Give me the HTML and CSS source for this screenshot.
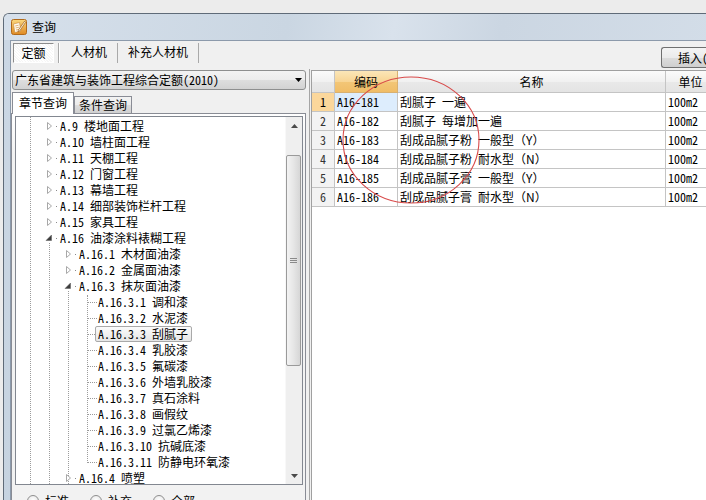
FILE: index.html
```html
<!DOCTYPE html>
<html>
<head>
<meta charset="utf-8">
<title>查询</title>
<link rel="stylesheet" href="styles.css">
</head>
<body>
<div class="desk">
  <div class="window">
    <div class="titlebar">
      <svg class="appicon" viewBox="0 0 16 16" width="16" height="16">
        <defs>
          <linearGradient id="ig" x1="0" y1="0" x2="0" y2="1">
            <stop offset="0" stop-color="#fbd87e"/>
            <stop offset="1" stop-color="#df8a24"/>
          </linearGradient>
        </defs>
        <rect x="0.5" y="0.5" width="15" height="15" rx="2" fill="url(#ig)" stroke="#b06a1c"/>
        <path d="M2.5 5 L8.5 3.5 L9.8 12 L3.8 13.5 Z" fill="#fffaf0" stroke="#c98a3a" stroke-width="0.6"/>
        <path d="M4.2 7 L7.6 6.2 M4.6 9 L8 8.2 M5 11 L8.4 10.2" stroke="#d9a35a" stroke-width="0.8"/>
        <path d="M13.6 2.2 L7.4 11 L7 13 L8.7 11.9 L14.6 3.3 Z" fill="#fff4d4" stroke="#8a4a10" stroke-width="0.6"/>
      </svg>
      <span class="title">查询</span>
    </div>
    <div class="client">
      <div class="toolbar">
        <div class="btabs">
          <span class="btab on">定额</span><span class="btab mid">人材机</span><span class="btab last">补充人材机</span>
        </div>
        <div class="insert">插入(I)</div>
      </div>
      <div class="main">
        <div class="left">
          <div class="combo">
            <span>广东省建筑与装饰工程综合定额(2010)</span>
            <svg width="7" height="4" viewBox="0 0 7 4"><path d="M0 0H7L3.5 4Z" fill="#000"/></svg>
          </div>
          <div class="itabs">
            <span class="itab on">章节查询</span><span class="itab">条件查询</span>
          </div>
          <div class="ipanel">
            <div class="tree">
              <div class="rows">
                <i class="vline la"></i>
                <i class="vline lb"></i>
                <i class="vline lc"></i>
                <i class="vline ld"></i>

                <div class="row l1"><svg class="ex" viewBox="0 0 16 16"><path d="M3.5 4.5L7.5 8L3.5 11.5Z" fill="#fff" stroke="#a8a8a8"/><rect x="12" y="8" width="1" height="1" fill="#8a8a8a"/></svg><span class="lbl">A.9 楼地面工程</span></div>
                <div class="row l1"><svg class="ex" viewBox="0 0 16 16"><path d="M3.5 4.5L7.5 8L3.5 11.5Z" fill="#fff" stroke="#a8a8a8"/><rect x="12" y="8" width="1" height="1" fill="#8a8a8a"/></svg><span class="lbl">A.10 墙柱面工程</span></div>
                <div class="row l1"><svg class="ex" viewBox="0 0 16 16"><path d="M3.5 4.5L7.5 8L3.5 11.5Z" fill="#fff" stroke="#a8a8a8"/><rect x="12" y="8" width="1" height="1" fill="#8a8a8a"/></svg><span class="lbl">A.11 天棚工程</span></div>
                <div class="row l1"><svg class="ex" viewBox="0 0 16 16"><path d="M3.5 4.5L7.5 8L3.5 11.5Z" fill="#fff" stroke="#a8a8a8"/><rect x="12" y="8" width="1" height="1" fill="#8a8a8a"/></svg><span class="lbl">A.12 门窗工程</span></div>
                <div class="row l1"><svg class="ex" viewBox="0 0 16 16"><path d="M3.5 4.5L7.5 8L3.5 11.5Z" fill="#fff" stroke="#a8a8a8"/><rect x="12" y="8" width="1" height="1" fill="#8a8a8a"/></svg><span class="lbl">A.13 幕墙工程</span></div>
                <div class="row l1"><svg class="ex" viewBox="0 0 16 16"><path d="M3.5 4.5L7.5 8L3.5 11.5Z" fill="#fff" stroke="#a8a8a8"/><rect x="12" y="8" width="1" height="1" fill="#8a8a8a"/></svg><span class="lbl">A.14 细部装饰栏杆工程</span></div>
                <div class="row l1"><svg class="ex" viewBox="0 0 16 16"><path d="M3.5 4.5L7.5 8L3.5 11.5Z" fill="#fff" stroke="#a8a8a8"/><rect x="12" y="8" width="1" height="1" fill="#8a8a8a"/></svg><span class="lbl">A.15 家具工程</span></div>
                <div class="row l1"><svg class="ex" viewBox="0 0 16 16"><path d="M7.5 5V10.5H2Z" fill="#3c3c3c" stroke="#5a5a5a" stroke-width="0.5"/><rect x="12" y="8" width="1" height="1" fill="#8a8a8a"/></svg><span class="lbl">A.16 油漆涂料裱糊工程</span></div>

                <div class="row l2"><svg class="ex" viewBox="0 0 16 16"><path d="M3.5 4.5L7.5 8L3.5 11.5Z" fill="#fff" stroke="#a8a8a8"/><rect x="12" y="8" width="1" height="1" fill="#8a8a8a"/></svg><span class="lbl">A.16.1 木材面油漆</span></div>
                <div class="row l2"><svg class="ex" viewBox="0 0 16 16"><path d="M3.5 4.5L7.5 8L3.5 11.5Z" fill="#fff" stroke="#a8a8a8"/><rect x="12" y="8" width="1" height="1" fill="#8a8a8a"/></svg><span class="lbl">A.16.2 金属面油漆</span></div>
                <div class="row l2"><svg class="ex" viewBox="0 0 16 16"><path d="M7.5 5V10.5H2Z" fill="#3c3c3c" stroke="#5a5a5a" stroke-width="0.5"/><rect x="12" y="8" width="1" height="1" fill="#8a8a8a"/></svg><span class="lbl">A.16.3 抹灰面油漆</span></div>

                <div class="row l3"><svg class="ex" viewBox="0 0 16 16"><path d="M6 8.5H15" stroke="#9a9a9a" stroke-dasharray="1 1"/></svg><span class="lbl">A.16.3.1 调和漆</span></div>
                <div class="row l3"><svg class="ex" viewBox="0 0 16 16"><path d="M6 8.5H15" stroke="#9a9a9a" stroke-dasharray="1 1"/></svg><span class="lbl">A.16.3.2 水泥漆</span></div>
                <div class="row l3"><svg class="ex" viewBox="0 0 16 16"><path d="M6 8.5H15" stroke="#9a9a9a" stroke-dasharray="1 1"/></svg><span class="lbl sel">A.16.3.3 刮腻子</span></div>
                <div class="row l3"><svg class="ex" viewBox="0 0 16 16"><path d="M6 8.5H15" stroke="#9a9a9a" stroke-dasharray="1 1"/></svg><span class="lbl">A.16.3.4 乳胶漆</span></div>
                <div class="row l3"><svg class="ex" viewBox="0 0 16 16"><path d="M6 8.5H15" stroke="#9a9a9a" stroke-dasharray="1 1"/></svg><span class="lbl">A.16.3.5 氟碳漆</span></div>
                <div class="row l3"><svg class="ex" viewBox="0 0 16 16"><path d="M6 8.5H15" stroke="#9a9a9a" stroke-dasharray="1 1"/></svg><span class="lbl">A.16.3.6 外墙乳胶漆</span></div>
                <div class="row l3"><svg class="ex" viewBox="0 0 16 16"><path d="M6 8.5H15" stroke="#9a9a9a" stroke-dasharray="1 1"/></svg><span class="lbl">A.16.3.7 真石涂料</span></div>
                <div class="row l3"><svg class="ex" viewBox="0 0 16 16"><path d="M6 8.5H15" stroke="#9a9a9a" stroke-dasharray="1 1"/></svg><span class="lbl">A.16.3.8 画假纹</span></div>
                <div class="row l3"><svg class="ex" viewBox="0 0 16 16"><path d="M6 8.5H15" stroke="#9a9a9a" stroke-dasharray="1 1"/></svg><span class="lbl">A.16.3.9 过氯乙烯漆</span></div>
                <div class="row l3"><svg class="ex" viewBox="0 0 16 16"><path d="M6 8.5H15" stroke="#9a9a9a" stroke-dasharray="1 1"/></svg><span class="lbl">A.16.3.10 抗碱底漆</span></div>
                <div class="row l3"><svg class="ex" viewBox="0 0 16 16"><path d="M6 8.5H15" stroke="#9a9a9a" stroke-dasharray="1 1"/></svg><span class="lbl">A.16.3.11 防静电环氧漆</span></div>

                <div class="row l2"><svg class="ex" viewBox="0 0 16 16"><path d="M3.5 4.5L7.5 8L3.5 11.5Z" fill="#fff" stroke="#a8a8a8"/><rect x="12" y="8" width="1" height="1" fill="#8a8a8a"/></svg><span class="lbl">A.16.4 喷塑</span></div>
              </div>
              <div class="vscroll">
                <div class="sbtn"><svg width="7" height="4" viewBox="0 0 7 4"><path d="M0 4H7L3.5 0Z" fill="#4a4a4a"/></svg></div>
                <div class="track">
                  <div class="thumb"><svg width="7" height="5" viewBox="0 0 7 5"><path d="M0 0.5H7M0 2.5H7M0 4.5H7" stroke="#8a8a8a"/></svg></div>
                </div>
                <div class="sbtn"><svg width="7" height="4" viewBox="0 0 7 4"><path d="M0 0H7L3.5 4Z" fill="#4a4a4a"/></svg></div>
              </div>
            </div>
            <div class="radios">
              <span class="radio"><i class="dot"></i>标准</span>
              <span class="radio"><i class="dot"></i>补充</span>
              <span class="radio"><i class="dot"></i>全部</span>
            </div>
          </div>
        </div>
        <div class="right">
          <table class="grid">
            <thead>
              <tr><th class="c0"></th><th class="c1 hsel">编码</th><th class="c2">名称</th><th class="c3">单位</th></tr>
            </thead>
            <tbody>
              <tr><td class="rn rsel">1</td><td class="code cur">A16-181</td><td class="name">刮腻子 一遍</td><td class="unit">100m2</td></tr>
              <tr><td class="rn">2</td><td class="code">A16-182</td><td class="name">刮腻子 每增加一遍</td><td class="unit">100m2</td></tr>
              <tr><td class="rn">3</td><td class="code">A16-183</td><td class="name">刮成品腻子粉 一般型<span class="fw">（Y）</span></td><td class="unit">100m2</td></tr>
              <tr><td class="rn">4</td><td class="code">A16-184</td><td class="name">刮成品腻子粉 耐水型<span class="fw">（N）</span></td><td class="unit">100m2</td></tr>
              <tr><td class="rn">5</td><td class="code">A16-185</td><td class="name">刮成品腻子膏 一般型<span class="fw">（Y）</span></td><td class="unit">100m2</td></tr>
              <tr><td class="rn">6</td><td class="code">A16-186</td><td class="name">刮成品腻子膏 耐水型<span class="fw">（N）</span></td><td class="unit">100m2</td></tr>
            </tbody>
          </table>
        </div>
      </div>
    </div>
  </div>
</div>
<svg class="annot" width="706" height="500" viewBox="0 0 706 500">
  <ellipse cx="411" cy="140" rx="68" ry="63" fill="none" stroke="#d84a4a" stroke-width="1.1"/>
</svg>
</body>
</html>
```
FILE: styles.css
```css
* { box-sizing: border-box; }
html, body { margin: 0; padding: 0; }
body {
  width: 706px;
  height: 500px;
  overflow: hidden;
  position: relative;
  background: #ececec;
  color: #000;
  font-family: "Noto Sans CJK SC", "Noto Sans", sans-serif;
  font-size: 12px;
  line-height: 16px;
  font-feature-settings: "hwid" 1;
}
.desk { padding: 13px 0 0 3px; }
.window {
  width: 710px;
  height: 500px;
  border: 1px solid #5f6b78;
  border-right: none;
  border-bottom: none;
  border-radius: 6px 0 0 0;
  background: linear-gradient(#dbe4ee, #cbd7e4 26px, #c6d3e0);
  overflow: hidden;
}
.titlebar {
  height: 26px;
  display: flex;
  align-items: center;
  gap: 5px;
  padding-left: 7px;
  background: linear-gradient(100deg, #d6e0eb 0%, #cad6e2 40%, #d9e2ec 55%, #cbd6e2 70%, #d3dde8 100%);
}
.appicon { display: block; }
.title { font-size: 12px; color: #000; }

.client {
  margin-left: 6px;
  height: 480px;
  border-left: 1px solid #8c9aab;
  border-top: 1px solid #8c9aab;
  background: #f0f0f0;
}
.toolbar {
  height: 28px;
  display: flex;
  justify-content: space-between;
  align-items: flex-start;
}
.btabs {
  display: flex;
  margin: 2px 0 0 2px;
}
.btab {
  height: 20px;
  line-height: 18px;
  white-space: nowrap;
}
.btab.on {
  width: 41px;
  text-align: center;
  border: 1px solid;
  border-color: #8c8c8c #ffffff #ffffff #8c8c8c;
  background: repeating-linear-gradient(45deg, #f6f6f6 0 1px, #ffffff 1px 2px);
}
.btab.mid {
  margin-left: 4px;
  padding: 0 10px 0 12px;
  border-left: 1px solid #a9a9a9;
  border-right: 1px solid #a9a9a9;
  box-shadow: inset 1px 0 #ffffff;
}
.btab.last {
  padding: 0 10px;
  border-right: 1px solid #a9a9a9;
}
.insert {
  margin-top: 6px;
  width: 52px;
  height: 21px;
  padding-left: 16px;
  line-height: 19px;
  white-space: nowrap;
  overflow: hidden;
  border: 1px solid #707070;
  border-right: none;
  border-radius: 3px 0 0 3px;
  background: linear-gradient(#f4f4f4, #ebebeb 50%, #dddddd 51%, #cfcfcf);
}

.main {
  display: flex;
  height: 440px;
}
.left {
  width: 299px;
  flex-shrink: 0;
  border-right: 1px solid #a5a5a5;
}
.combo {
  margin: 1px 0 0 1px;
  width: 294px;
  height: 20px;
  display: flex;
  align-items: center;
  justify-content: space-between;
  padding: 0 3px 0 2px;
  border: 1px solid #8e8f8f;
  border-radius: 3px;
  background: linear-gradient(#f3f3f3, #ececec 50%, #dedede 51%, #d2d2d2);
  white-space: nowrap;
}
.combo svg { display: block; }
.itabs {
  margin-top: 2px;
  height: 21px;
  display: flex;
  align-items: flex-end;
  padding-left: 1px;
}
.itab {
  height: 17px;
  line-height: 16px;
  padding: 0 4px;
  border: 1px solid #898c95;
  border-bottom: none;
  background: linear-gradient(#f3f3f3, #ebebeb 50%, #dddddd 51%, #d0d0d0);
  white-space: nowrap;
}
.itab.on {
  height: 22px;
  line-height: 20px;
  padding: 0 6px;
  margin-bottom: -1px;
  position: relative;
  background: #ffffff;
}
.ipanel {
  width: 295px;
  height: 400px;
  border: 1px solid #898c95;
  padding: 2px 2px 0 3px;
  background: linear-gradient(#ffffff, #f2f2f2 40px);
}
.tree {
  width: 288px;
  height: 369px;
  display: flex;
  border: 1px solid #828790;
  background: #ffffff;
}
.rows {
  flex: 1;
  position: relative;
  overflow: hidden;
  padding-top: 1px;
}
.vline {
  position: absolute;
  width: 0;
  border-left: 1px dotted #9c9c9c;
}
.la { left: 14px; top: 0; bottom: 0; }
.lb { left: 33px; top: 126px; bottom: 0; }
.lc { left: 52px; top: 174px; bottom: 0; }
.ld { left: 71px; top: 178px; height: 168px; }
.row {
  height: 16px;
  display: flex;
  align-items: center;
  white-space: nowrap;
}
.row.l1 { padding-left: 28px; }
.row.l2 { padding-left: 47px; }
.row.l3 { padding-left: 66px; }
.ex {
  width: 16px;
  height: 16px;
  flex-shrink: 0;
  display: block;
  position: relative;
}
.lbl { line-height: 16px; }
.lbl.sel {
  margin-left: -3px;
  padding: 0 3px 0 2px;
  height: 16px;
  line-height: 14px;
  border: 1px solid #a9a9a9;
  border-radius: 2px;
  background: linear-gradient(#fbfbfb, #e6e6e6);
  position: relative;
}
.vscroll {
  width: 17px;
  flex-shrink: 0;
  display: flex;
  flex-direction: column;
  background: #efefef;
  border-left: 1px solid #f8f8f8;
}
.sbtn {
  height: 17px;
  display: flex;
  align-items: center;
  justify-content: center;
}
.sbtn svg { display: block; }
.track {
  flex: 1;
  padding-top: 21px;
}
.thumb {
  margin: 0 1px 0 0;
  height: 211px;
  border: 1px solid #9a9a9a;
  border-radius: 2px;
  background: linear-gradient(90deg, #f3f3f3, #e6e6e6 50%, #d6d6d6);
  display: flex;
  align-items: center;
  justify-content: center;
}
.thumb svg { display: block; }
.radios {
  display: flex;
  padding: 8px 0 0 12px;
}
.radio {
  display: flex;
  align-items: center;
  gap: 6px;
  margin-right: 21px;
  white-space: nowrap;
}
.dot {
  width: 12px;
  height: 12px;
  border-radius: 50%;
  border: 1px solid #8f8f8f;
  background: radial-gradient(circle at 50% 40%, #ffffff, #dedede);
}

.right {
  flex: 1;
  margin: 1px 0 0 1px;
  border-left: 1px solid #a0a0a0;
  border-top: 1px solid #a0a0a0;
  background: #ffffff;
  overflow: hidden;
}
.grid {
  table-layout: fixed;
  width: 404px;
  border-collapse: separate;
  border-spacing: 0;
}
.grid th, .grid td {
  padding: 0;
  border-right: 1px solid #c4c4c4;
  border-bottom: 1px solid #c4c4c4;
  white-space: nowrap;
  overflow: hidden;
}
.grid th {
  height: 22px;
  font-weight: normal;
  text-align: center;
  background: linear-gradient(#fbfbfb, #f1f1f1 50%, #e9e9e9 51%, #e4e4e4);
}
.grid th.c0 { width: 23px; }
.grid th.c1 { width: 63px; }
.grid th.c2 { width: 268px; }
.grid th.c3 { width: 50px; }
.grid th.hsel {
  background: linear-gradient(#fbe6b8, #f8d594 50%, #f3c677 51%, #f0bd67);
  border-right-color: #d8b070;
  border-bottom-color: #d8b070;
}
.grid td { height: 19px; }
.grid td.rn {
  text-align: center;
  color: #333333;
  background: #f3f3f3;
}
.grid td.rsel { background: #fbd79b; color: #000; }
.grid td.code { padding-left: 2px; }
.grid td.cur { background: #ddedfd; }
.grid td.name { padding-left: 2px; }
.grid td.unit { padding-left: 2px; }
.fw { font-feature-settings: normal; }

.annot {
  position: absolute;
  left: 0;
  top: 0;
  pointer-events: none;
}
```
